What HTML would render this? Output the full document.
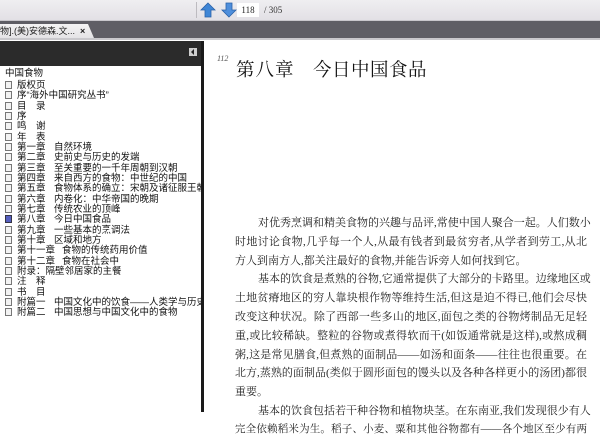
<!DOCTYPE html>
<html><head><meta charset="utf-8"><style>
*{margin:0;padding:0;box-sizing:border-box}
body{width:600px;height:412px;overflow:hidden;background:#fff;position:relative;font-family:"Liberation Sans","Noto Sans CJK SC",sans-serif}
.tb{position:absolute;left:0;top:0;width:600px;height:21px;background:linear-gradient(#efeef1,#e2e0e5);border-bottom:1px solid #c9c7cc}
.sep{position:absolute;left:196px;top:2px;width:1px;height:16px;background:#bdbbc0}
.inp{position:absolute;left:237px;top:3px;width:22px;height:14px;background:#fff;font:9px "Liberation Serif",serif;line-height:14px;text-align:center;color:#222}
.tot{position:absolute;left:264px;top:3px;font:9px "Liberation Serif",serif;line-height:14px;color:#333}
.tabbar{position:absolute;left:0;top:21px;width:600px;height:19px;background:#5f5e65;border-bottom:2px solid #c9c8cc}
.tab{position:absolute;left:0;top:3px;width:94px;height:14px;background:linear-gradient(#f4f3f4,#e4e3e6);clip-path:polygon(0 0,88px 0,94px 14px,0 14px);font-size:9px;line-height:14px;color:#222;white-space:nowrap;overflow:hidden}
.tab b{position:absolute;left:80px;top:0;font-weight:bold;font-size:9px}
.side{position:absolute;left:0;top:41px;width:204px;height:371px;background:#fff;border-right:3px solid #1a1a1a;overflow:hidden}
.sh{position:absolute;left:0;top:0;width:201px;height:25px;background:#2b2b2b}
.sh i{position:absolute;left:189px;top:7px;width:8px;height:8px;background:#cfcfcf}
.sh i:after{content:"";position:absolute;left:2px;top:1px;border:3px solid transparent;border-right:3px solid #222;border-left:0}
.tree{position:absolute;left:0;top:26px;width:201px;height:340px;overflow:hidden;font-size:9.5px;color:#111;white-space:nowrap}
.r{position:absolute;height:10px;line-height:10px;left:0;width:201px}
.cb{position:absolute;left:5px;width:7px;height:8px;border:1px solid #777;background:#f3f3f3}
.cb.s{background:#5660c0;border-color:#334}
.t{position:absolute;left:17px}
.t2{position:absolute;left:54px}
.pg{position:absolute;left:217px;top:54px;font:italic 8px "Liberation Serif",serif;color:#555}
.title{position:absolute;top:56px;font:18.5px "Liberation Serif","Noto Serif CJK SC",serif;color:#111;white-space:nowrap;letter-spacing:1px}
.body{position:absolute;left:235px;top:214px;width:352px;font:11px "Liberation Serif","Noto Serif CJK SC",serif;color:#222}
.body div{height:18.8px;line-height:18.8px;text-align:justify;text-align-last:justify;white-space:nowrap}
.body div.in{padding-left:23px}
.body div.l{text-align-last:left}
</style></head><body>
<div class="tb">
<div class="sep"></div>
<svg style="position:absolute;left:200px;top:2px" width="16" height="16" viewBox="0 0 16 16"><path d="M8 1 L15 8 H11 V15 H5 V8 H1 Z" fill="#3f86d6" stroke="#2a62a8" stroke-width="0.8"/></svg>
<svg style="position:absolute;left:221px;top:2px" width="16" height="16" viewBox="0 0 16 16"><path d="M8 15 L15 8 H11 V1 H5 V8 H1 Z" fill="#4f8fdc" stroke="#2a62a8" stroke-width="0.8"/></svg>
<div class="inp">118</div><div class="tot">/ 305</div>
</div>
<div class="tabbar"><div class="tab">物].(美)安德森.文...<b>×</b></div></div>
<div class="side">
<div class="sh"><i></i></div>
<div class="tree">
<div class="r" style="top:2px;left:5px">中国食物</div>
<div class="r" style="top:14px"><span class="cb"></span><span class="t">版权页</span></div>
<div class="r" style="top:24px"><span class="cb"></span><span class="t">序“海外中国研究丛书”</span></div>
<div class="r" style="top:35px"><span class="cb"></span><span class="t">目　录</span></div>
<div class="r" style="top:45px"><span class="cb"></span><span class="t">序</span></div>
<div class="r" style="top:55px"><span class="cb"></span><span class="t">鸣　谢</span></div>
<div class="r" style="top:66px"><span class="cb"></span><span class="t">年　表</span></div>
<div class="r" style="top:76px"><span class="cb"></span><span class="t">第一章</span><span class="t2">自然环境</span></div>
<div class="r" style="top:86px"><span class="cb"></span><span class="t">第二章</span><span class="t2">史前史与历史的发端</span></div>
<div class="r" style="top:97px"><span class="cb"></span><span class="t">第三章</span><span class="t2">至关重要的一千年周朝到汉朝</span></div>
<div class="r" style="top:107px"><span class="cb"></span><span class="t">第四章</span><span class="t2">来自西方的食物：中世纪的中国</span></div>
<div class="r" style="top:117px"><span class="cb"></span><span class="t">第五章</span><span class="t2">食物体系的确立：宋朝及诸征服王朝</span></div>
<div class="r" style="top:128px"><span class="cb"></span><span class="t">第六章</span><span class="t2">内卷化：中华帝国的晚期</span></div>
<div class="r" style="top:138px"><span class="cb"></span><span class="t">第七章</span><span class="t2">传统农业的顶峰</span></div>
<div class="r" style="top:148px"><span class="cb s"></span><span class="t">第八章</span><span class="t2">今日中国食品</span></div>
<div class="r" style="top:159px"><span class="cb"></span><span class="t">第九章</span><span class="t2">一些基本的烹调法</span></div>
<div class="r" style="top:169px"><span class="cb"></span><span class="t">第十章</span><span class="t2">区域和地方</span></div>
<div class="r" style="top:179px"><span class="cb"></span><span class="t">第十一章</span><span class="t2" style="left:62px">食物的传统药用价值</span></div>
<div class="r" style="top:190px"><span class="cb"></span><span class="t">第十二章</span><span class="t2" style="left:62px">食物在社会中</span></div>
<div class="r" style="top:200px"><span class="cb"></span><span class="t">附录：隔壁邻居家的主餐</span></div>
<div class="r" style="top:210px"><span class="cb"></span><span class="t">注　释</span></div>
<div class="r" style="top:221px"><span class="cb"></span><span class="t">书　目</span></div>
<div class="r" style="top:231px"><span class="cb"></span><span class="t">附篇一</span><span class="t2">中国文化中的饮食——人类学与历史学</span></div>
<div class="r" style="top:241px"><span class="cb"></span><span class="t">附篇二</span><span class="t2">中国思想与中国文化中的食物</span></div>
</div>
</div>
<div class="pg">112</div>
<div class="title" style="left:236px">第八章</div>
<div class="title" style="left:313px;letter-spacing:0.5px">今日中国食品</div>
<div class="body">
<div class="in">对优秀烹调和精美食物的兴趣与品评,常使中国人聚合一起。人们数小</div>
<div>时地讨论食物,几乎每一个人,从最有钱者到最贫穷者,从学者到劳工,从北</div>
<div class="l">方人到南方人,都关注最好的食物,并能告诉旁人如何找到它。</div>
<div class="in">基本的饮食是煮熟的谷物,它通常提供了大部分的卡路里。边缘地区或</div>
<div>土地贫瘠地区的穷人靠块根作物等维持生活,但这是迫不得已,他们会尽快</div>
<div>改变这种状况。除了西部一些多山的地区,面包之类的谷物烤制品无足轻</div>
<div>重,或比较稀缺。整粒的谷物或煮得软而干(如饭通常就是这样),或熬成稠</div>
<div>粥,这是常见膳食,但煮熟的面制品——如汤和面条——往往也很重要。在</div>
<div>北方,蒸熟的面制品(类似于圆形面包的馒头以及各种各样更小的汤团)都很</div>
<div class="l">重要。</div>
<div class="in">基本的饮食包括若干种谷物和植物块茎。在东南亚,我们发现很少有人</div>
<div style="font-size:10.5px">完全依赖稻米为生。稻子、小麦、粟和其他谷物都有——各个地区至少有两</div>
</div>
</body></html>
